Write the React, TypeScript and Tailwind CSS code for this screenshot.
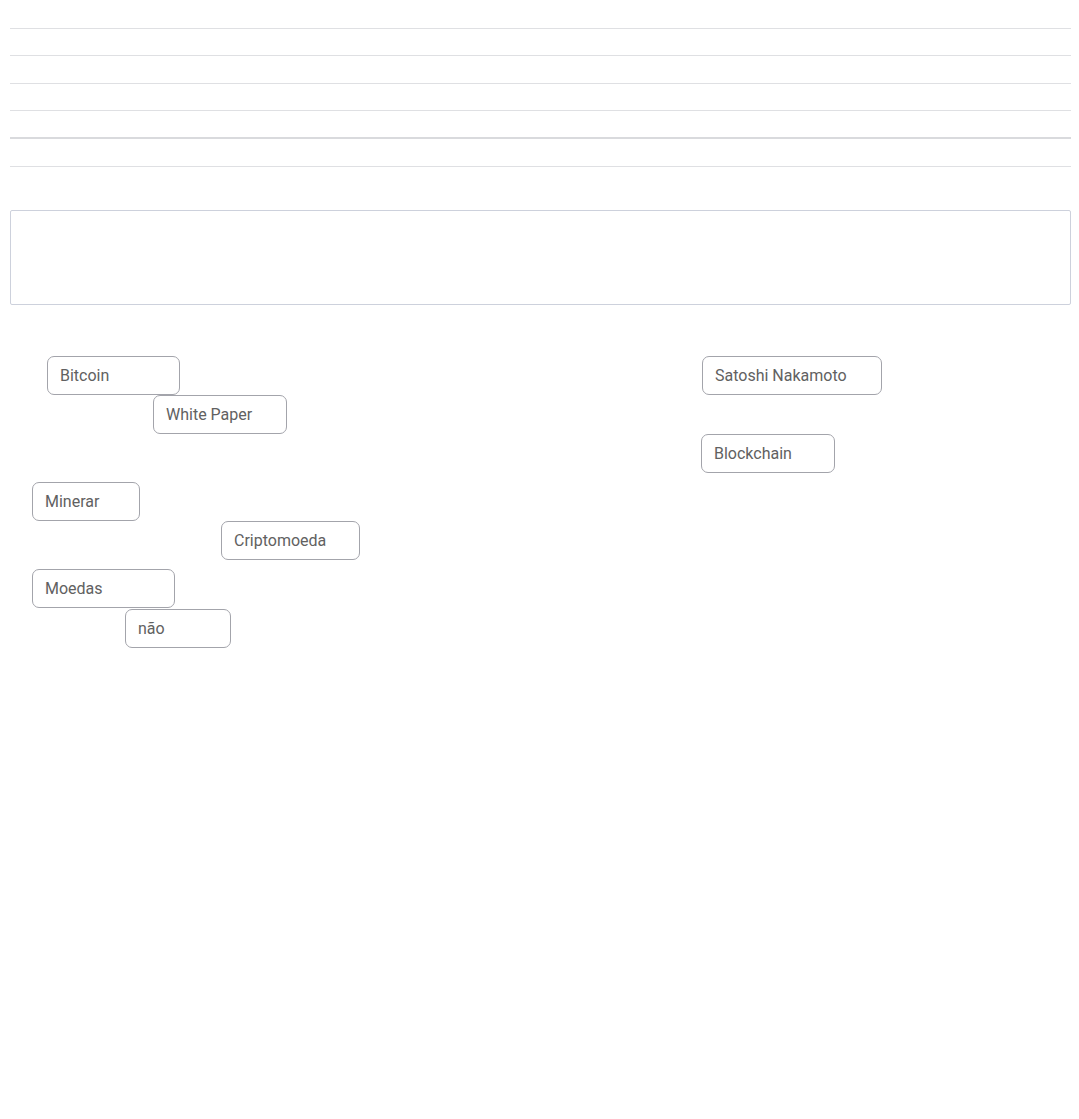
import React from "react";

const chips: { label: string; left: number; top: number; width: number }[] = [
  { label: "Bitcoin", left: 47, top: 51, width: 133 },
  { label: "White Paper", left: 153, top: 90, width: 134 },
  { label: "Satoshi Nakamoto", left: 702, top: 51, width: 180 },
  { label: "Blockchain", left: 701, top: 129, width: 134 },
  { label: "Minerar", left: 32, top: 177, width: 108 },
  { label: "Criptomoeda", left: 221, top: 216, width: 139 },
  { label: "Moedas", left: 32, top: 264, width: 143 },
  { label: "não", left: 125, top: 304, width: 106 },
];

export default function App() {
  return (
    <div className="min-h-[1119px] bg-white font-['Roboto','Liberation_Sans',sans-serif]">
      <div className="pl-[10px] pr-[8px] pt-[28px]">
        <div className="h-[27px] border-t border-[#dfe0e3]" />
        <div className="h-[28px] border-t border-[#dfe0e3]" />
        <div className="h-[27px] border-t border-[#dfe0e3]" />
        <div className="h-[27px] border-t border-[#dfe0e3]" />
        <div className="h-[29px] border-t-2 border-[#d9dadd]" />
        <div className="h-[44px] border-t border-[#dfe0e3]" />
        <div className="h-[95px] rounded-[2px] border border-[#cdd1dc] bg-white" />
      </div>
      <div className="relative h-[400px]">
        {chips.map((c) => (
          <div
            key={c.label}
            className="absolute flex h-[39px] items-center rounded-[7px] border border-[#a3a4ab] bg-white pl-[12px] text-[16px] text-[#616161]"
            style={{ left: c.left, top: c.top, width: c.width }}
          >
            {c.label}
          </div>
        ))}
      </div>
    </div>
  );
}
